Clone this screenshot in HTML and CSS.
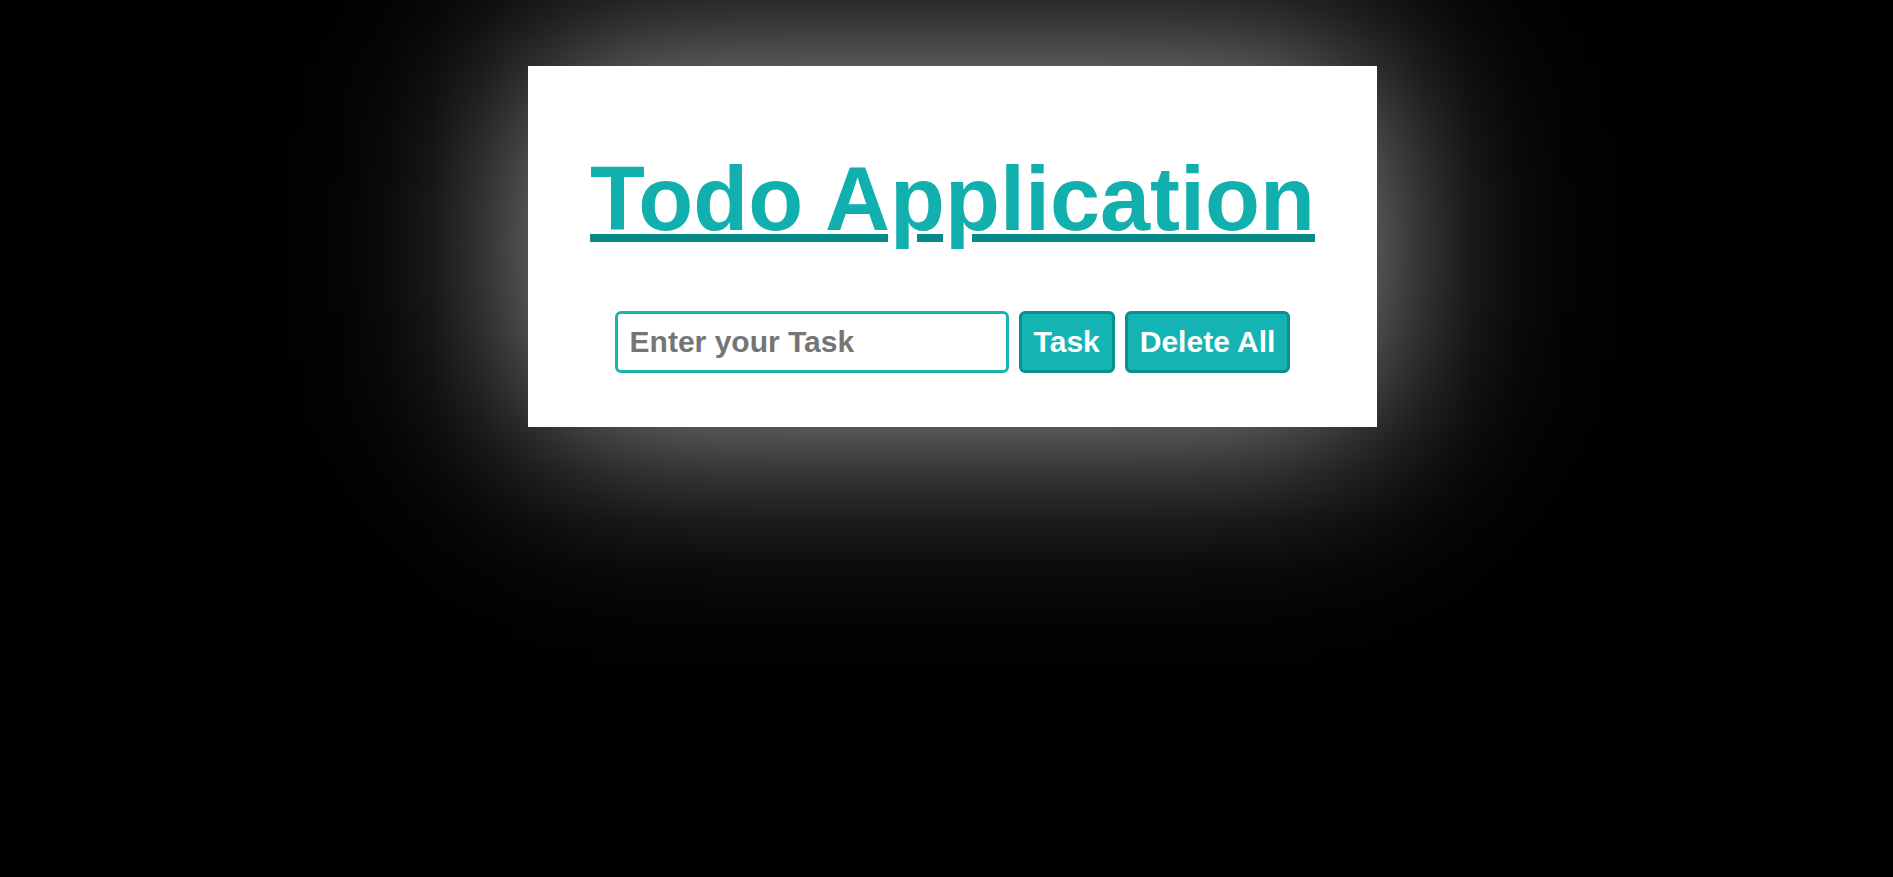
FILE: index.html
```html
<!DOCTYPE html>
<html lang="en">
<head>
<meta charset="utf-8">
<title>Todo Application</title>
<link rel="stylesheet" href="styles.css">
</head>
<body>
  <main class="card">
    <h1 class="title">Todo Application</h1>
    <div class="row">
      <input class="task-input" type="text" placeholder="Enter your Task">
      <button class="btn">Task</button>
      <button class="btn">Delete All</button>
    </div>
  </main>
</body>
</html>
```
FILE: styles.css
```css
html {
  margin: 0;
  padding: 0;
  background: #000;
  height: 100%;
  overflow: hidden;
}

body {
  margin: 0;
  height: 100%;
  overflow: hidden;
  font-family: "Liberation Sans", Arial, sans-serif;
  padding-top: 66px;
  box-sizing: border-box;
}

.card {
  position: relative;
  width: 849px;
  height: 361px;
  margin-left: calc(50% - 418.5px);
  background: #fff;
  box-sizing: border-box;
  padding-top: 83px;
  display: flex;
  flex-direction: column;
  align-items: center;
}

/* soft white glow behind the card (separable gaussian approximation) */
.card::before {
  content: "";
  position: absolute;
  top: -285px;
  left: -285px;
  right: -285px;
  bottom: -285px;
  z-index: -1;
  pointer-events: none;
  background: linear-gradient(to right,
    rgba(172,172,172,.0013) 0px,
    rgba(172,172,172,.0062) 47.5px,
    rgba(172,172,172,.0228) 95px,
    rgba(172,172,172,.0668) 142.5px,
    rgba(172,172,172,.1587) 190px,
    rgba(172,172,172,.3085) 237.5px,
    rgba(172,172,172,.5) 285px,
    rgba(172,172,172,.6915) 332.5px,
    rgba(172,172,172,.8413) 380px,
    rgba(172,172,172,.9332) 427.5px,
    rgba(172,172,172,.9772) 475px,
    rgba(172,172,172,.9938) 522.5px,
    rgba(172,172,172,1) 570px,
    rgba(172,172,172,1) 849px,
    rgba(172,172,172,.9938) 896.5px,
    rgba(172,172,172,.9772) 944px,
    rgba(172,172,172,.9332) 991.5px,
    rgba(172,172,172,.8413) 1039px,
    rgba(172,172,172,.6915) 1086.5px,
    rgba(172,172,172,.5) 1134px,
    rgba(172,172,172,.3085) 1181.5px,
    rgba(172,172,172,.1587) 1229px,
    rgba(172,172,172,.0668) 1276.5px,
    rgba(172,172,172,.0228) 1324px,
    rgba(172,172,172,.0062) 1371.5px,
    rgba(172,172,172,.0013) 1419px);
  -webkit-mask-image: linear-gradient(to bottom,
    rgba(0,0,0,.0013) 0px,
    rgba(0,0,0,.0062) 47.5px,
    rgba(0,0,0,.0228) 95px,
    rgba(0,0,0,.0668) 142.5px,
    rgba(0,0,0,.1587) 190px,
    rgba(0,0,0,.3085) 237.5px,
    rgba(0,0,0,.5) 285px,
    rgba(0,0,0,.691) 332.5px,
    rgba(0,0,0,.8387) 380px,
    rgba(0,0,0,.9225) 427.5px,
    rgba(0,0,0,.9426) 465.5px,
    rgba(0,0,0,.9225) 503.5px,
    rgba(0,0,0,.8387) 551px,
    rgba(0,0,0,.691) 598.5px,
    rgba(0,0,0,.5) 646px,
    rgba(0,0,0,.3085) 693.5px,
    rgba(0,0,0,.1587) 741px,
    rgba(0,0,0,.0668) 788.5px,
    rgba(0,0,0,.0228) 836px,
    rgba(0,0,0,.0062) 883.5px,
    rgba(0,0,0,.0013) 931px);
  mask-image: linear-gradient(to bottom,
    rgba(0,0,0,.0013) 0px,
    rgba(0,0,0,.0062) 47.5px,
    rgba(0,0,0,.0228) 95px,
    rgba(0,0,0,.0668) 142.5px,
    rgba(0,0,0,.1587) 190px,
    rgba(0,0,0,.3085) 237.5px,
    rgba(0,0,0,.5) 285px,
    rgba(0,0,0,.691) 332.5px,
    rgba(0,0,0,.8387) 380px,
    rgba(0,0,0,.9225) 427.5px,
    rgba(0,0,0,.9426) 465.5px,
    rgba(0,0,0,.9225) 503.5px,
    rgba(0,0,0,.8387) 551px,
    rgba(0,0,0,.691) 598.5px,
    rgba(0,0,0,.5) 646px,
    rgba(0,0,0,.3085) 693.5px,
    rgba(0,0,0,.1587) 741px,
    rgba(0,0,0,.0668) 788.5px,
    rgba(0,0,0,.0228) 836px,
    rgba(0,0,0,.0062) 883.5px,
    rgba(0,0,0,.0013) 931px);
}

.title {
  margin: 0;
  font-size: 90px;
  line-height: 100px;
  font-weight: 700;
  color: #12afaf;
  text-decoration: underline;
  text-decoration-color: #078a8a;
  text-decoration-thickness: 8px;
  text-underline-offset: 4px;
}

.row {
  margin-top: 62px;
  display: flex;
  gap: 10px;
  height: 62px;
}

.task-input {
  width: 394px;
  height: 62px;
  box-sizing: border-box;
  border: 3px solid #17b2b2;
  border-radius: 6px;
  padding: 0 12px;
  font-family: "Liberation Sans", Arial, sans-serif;
  font-size: 30px;
  font-weight: 700;
  color: #333;
  background: #fff;
  outline: none;
}

.task-input::placeholder {
  color: #757575;
}

.btn {
  height: 62px;
  box-sizing: border-box;
  border: 3px solid #0a8e8e;
  border-radius: 6px;
  background: #15b4b4;
  color: #fff;
  padding: 0 12px;
  font-family: "Liberation Sans", Arial, sans-serif;
  font-size: 30px;
  font-weight: 700;
  cursor: pointer;
}
```
